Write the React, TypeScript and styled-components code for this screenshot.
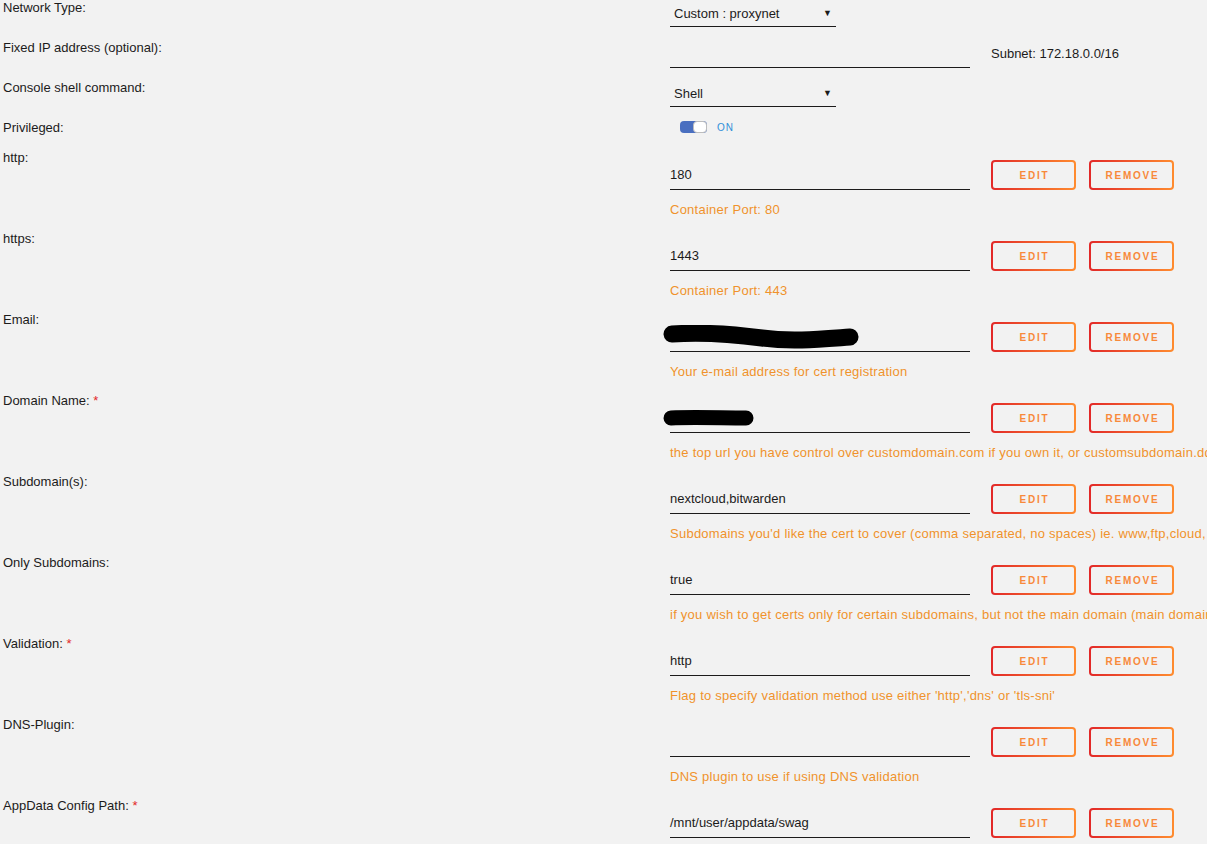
import { FC, ReactNode } from 'react'
import styled, { createGlobalStyle } from 'styled-components'

type Redaction = 'email' | 'domain'

interface IConfig {
   label: string
   value?: string
   required?: boolean
   redact?: Redaction
   description?: string
}

const configs: IConfig[] = [
   { label: 'http', value: '180', description: 'Container Port: 80' },
   { label: 'https', value: '1443', description: 'Container Port: 443' },
   { label: 'Email', redact: 'email', description: 'Your e-mail address for cert registration' },
   {
      label: 'Domain Name',
      required: true,
      redact: 'domain',
      description:
         "the top url you have control over customdomain.com if you own it, or customsubdomain.ddnsprovider.com if you don't own a domain",
   },
   {
      label: 'Subdomain(s)',
      value: 'nextcloud,bitwarden',
      description: "Subdomains you'd like the cert to cover (comma separated, no spaces) ie. www,ftp,cloud,",
   },
   {
      label: 'Only Subdomains',
      value: 'true',
      description:
         'if you wish to get certs only for certain subdomains, but not the main domain (main domain may be hosted on another machine and cannot be validated)',
   },
   {
      label: 'Validation',
      required: true,
      value: 'http',
      description: "Flag to specify validation method use either 'http','dns' or 'tls-sni'",
   },
   { label: 'DNS-Plugin', value: '', description: 'DNS plugin to use if using DNS validation' },
   { label: 'AppData Config Path', required: true, value: '/mnt/user/appdata/swag' },
]

const Scribble: FC<{ kind: Redaction }> = ({ kind }) =>
   kind === 'email' ? (
      <svg width='200' height='24' viewBox='0 0 200 24'>
         <path
            d='M10 9 C 40 7, 70 9, 100 13 S 160 14, 188 12'
            stroke='#000'
            strokeWidth='17'
            strokeLinecap='round'
            fill='none'
         />
      </svg>
   ) : (
      <svg width='96' height='20' viewBox='0 0 96 20'>
         <path d='M9 10 C 30 9, 60 10, 84 10' stroke='#000' strokeWidth='15' strokeLinecap='round' fill='none' />
      </svg>
   )

const Label: FC<{ text: string; required?: boolean }> = ({ text, required }) => (
   <LabelText>
      {text}:{required && <Star> *</Star>}
   </LabelText>
)

const ConfigRow: FC<IConfig> = ({ label, value, required, redact, description }) => (
   <Row>
      <Label text={label} required={required} />
      <Content>
         <InputLine>
            <Field $width={300}>{redact ? <Scribble kind={redact} /> : value}</Field>
            <Button>Edit</Button>
            <Button>Remove</Button>
         </InputLine>
         {description && <Description>{description}</Description>}
      </Content>
   </Row>
)

const TopRow: FC<{ label: string; height: number; children: ReactNode }> = ({ label, height, children }) => (
   <Simple $height={height}>
      <Label text={label} />
      <SimpleContent>{children}</SimpleContent>
   </Simple>
)

const App: FC = () => (
   <>
      <GlobalStyle />
      <Page>
         <TopRow label='Network Type' height={40}>
            <Select>
               Custom : proxynet<Arrow>▼</Arrow>
            </Select>
         </TopRow>
         <TopRow label='Fixed IP address (optional)' height={40}>
            <Field $width={300} $height={28} />
            <Subnet>Subnet: 172.18.0.0/16</Subnet>
         </TopRow>
         <TopRow label='Console shell command' height={40}>
            <Select>
               Shell<Arrow>▼</Arrow>
            </Select>
         </TopRow>
         <TopRow label='Privileged' height={30}>
            <Switch>
               <Knob />
            </Switch>
            <SwitchText>ON</SwitchText>
         </TopRow>
         {configs.map(c => (
            <ConfigRow key={c.label} {...c} />
         ))}
      </Page>
   </>
)

const GlobalStyle = createGlobalStyle`
   html, body {
      margin: 0;
      padding: 0;
      background: #f2f2f2;
      overflow: hidden;
   }
   body {
      font-family: "Liberation Sans", Arial, sans-serif;
      font-size: 13px;
      color: #1c1b1b;
   }
`

const Page = styled.div`
   width: 1207px;
   height: 844px;
   overflow: hidden;
   padding-left: 3px;
   box-sizing: border-box;
`

const Simple = styled.div<{ $height: number }>`
   display: grid;
   grid-template-columns: 667px 1fr;
   height: ${p => p.$height}px;
`

const SimpleContent = styled.div`
   display: flex;
   align-items: flex-start;
`

const Row = styled.div`
   display: grid;
   grid-template-columns: 667px 1fr;
   height: 81px;
`

const LabelText = styled.div`
   line-height: 16px;
   white-space: nowrap;
`

const Star = styled.span`
   color: #e22828;
`

const Content = styled.div`
   padding-top: 10px;
   display: flex;
   flex-direction: column;
   min-width: 0;
`

const InputLine = styled.div`
   display: flex;
   align-items: center;
`

const Field = styled.div<{ $width: number; $height?: number }>`
   width: ${p => p.$width}px;
   height: ${p => p.$height ?? 30}px;
   box-sizing: border-box;
   border-bottom: 1px solid #1c1b1b;
   display: flex;
   align-items: center;
   white-space: nowrap;
   overflow: visible;

   svg {
      margin-left: -8px;
      flex-shrink: 0;
   }
`

const Button = styled.button`
   margin-left: 21px;
   & + & {
      margin-left: 13px;
   }
   width: 85px;
   height: 30px;
   box-sizing: border-box;
   border: 2px solid transparent;
   border-radius: 4px;
   background:
      linear-gradient(#f2f2f2, #f2f2f2) padding-box,
      linear-gradient(90deg, #e22828 0%, #ff8c2f 100%) border-box;
   color: #f8893a;
   font-family: "Liberation Sans", Arial, sans-serif;
   font-weight: bold;
   font-size: 10px;
   letter-spacing: 1.8px;
   text-transform: uppercase;
   padding: 0 0 0 2px;
   cursor: pointer;
`

const Description = styled.div`
   margin-top: 12px;
   line-height: 16px;
   color: #f0922c;
   letter-spacing: 0.25px;
   white-space: nowrap;
`

const Select = styled.div`
   position: relative;
   width: 166px;
   height: 27px;
   box-sizing: border-box;
   border-bottom: 1px solid #1c1b1b;
   padding-left: 4px;
   display: flex;
   align-items: center;
`

const Arrow = styled.span`
   margin-left: auto;
   margin-right: 4px;
   font-size: 9px;
`

const Subnet = styled.span`
   margin-left: 21px;
   line-height: 28px;
`

const Switch = styled.div`
   margin: 1px 0 0 10px;
   width: 27px;
   height: 12px;
   box-sizing: border-box;
   border-radius: 4px;
   background: #4a6fc0;
   display: flex;
   justify-content: flex-end;
`

const Knob = styled.div`
   width: 14px;
   height: 12px;
   box-sizing: border-box;
   background: #fff;
   border: 1px solid #bdbdbd;
   border-radius: 4px;
`

const SwitchText = styled.span`
   margin: 1px 0 0 10px;
   font-size: 10px;
   line-height: 14px;
   letter-spacing: 1px;
   color: #2f8fd8;
`

export default App
